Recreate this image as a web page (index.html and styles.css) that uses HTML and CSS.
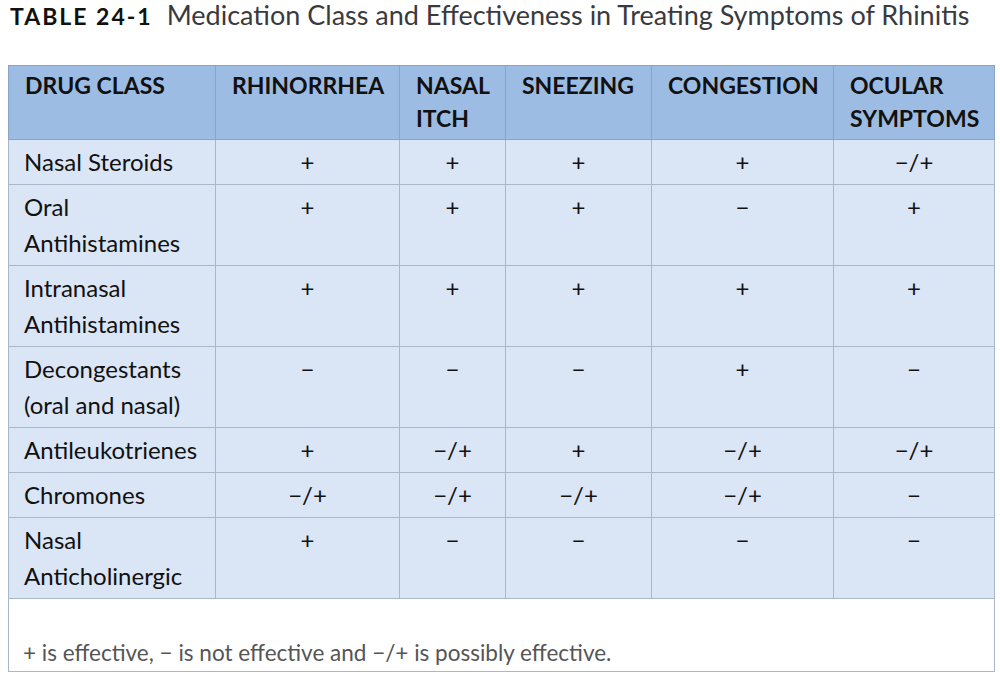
FILE: index.html
```html
<!DOCTYPE html>
<html>
<head>
<meta charset="utf-8">
<link rel="stylesheet" href="styles.css">
</head>
<body>
<h1 class="title"><span class="label">TABLE 24-1</span><span class="caption">Medication Class and Effectiveness in Treating Symptoms of Rhinitis</span></h1>
<table class="grid">
  <colgroup>
    <col class="c1"><col class="c2"><col class="c3"><col class="c4"><col class="c5"><col class="c6">
  </colgroup>
  <thead>
    <tr>
      <th>DRUG CLASS</th>
      <th>RHINORRHEA</th>
      <th>NASAL ITCH</th>
      <th>SNEEZING</th>
      <th>CONGESTION</th>
      <th>OCULAR SYMPTOMS</th>
    </tr>
  </thead>
  <tbody>
    <tr><td class="name">Nasal Steroids</td><td>+</td><td>+</td><td>+</td><td>+</td><td>−/+</td></tr>
    <tr><td class="name">Oral<br>Antihistamines</td><td>+</td><td>+</td><td>+</td><td>−</td><td>+</td></tr>
    <tr><td class="name">Intranasal<br>Antihistamines</td><td>+</td><td>+</td><td>+</td><td>+</td><td>+</td></tr>
    <tr><td class="name">Decongestants<br>(oral and nasal)</td><td>−</td><td>−</td><td>−</td><td>+</td><td>−</td></tr>
    <tr><td class="name">Antileukotrienes</td><td>+</td><td>−/+</td><td>+</td><td>−/+</td><td>−/+</td></tr>
    <tr><td class="name">Chromones</td><td>−/+</td><td>−/+</td><td>−/+</td><td>−/+</td><td>−</td></tr>
    <tr><td class="name">Nasal<br>Anticholinergic</td><td>+</td><td>−</td><td>−</td><td>−</td><td>−</td></tr>
  </tbody>
  <tfoot>
    <tr><td colspan="6" class="note">+ is effective, − is not effective and −/+ is possibly effective.</td></tr>
  </tfoot>
</table>
</body>
</html>
```
FILE: styles.css
```css
body {
  margin: 0;
  padding: 0 8px;
  background: #ffffff;
  font-family: Lato, "Open Sans", sans-serif;
}
.title {
  margin: 0;
  padding: 0 0 0 2px;
  height: 65px;
  line-height: 26px;
  font-weight: normal;
  white-space: nowrap;
}
.label {
  font-size: 23px;
  font-weight: bold;
  letter-spacing: 2px;
  color: #111;
  margin-right: 14px;
}
.caption {
  font-size: 27px;
  color: #3a3a3e;
}
.grid {
  border-collapse: collapse;
  table-layout: fixed;
  width: 986px;
}
.c1 { width: 207px; }
.c2 { width: 184px; }
.c3 { width: 106px; }
.c4 { width: 146px; }
.c5 { width: 182px; }
.c6 { width: 161px; }
.grid th {
  background: #9dbce3;
  border: 1px solid #8aa4c4;
  text-align: left;
  vertical-align: top;
  font-size: 23px;
  font-weight: bold;
  line-height: 33px;
  padding: 3px 6px 4px 16px;
  color: #111;
}
.grid td {
  background: #dae5f5;
  border: 1px solid #a9b7c9;
  text-align: center;
  vertical-align: top;
  font-size: 24px;
  line-height: 36px;
  padding: 4px 10px 4px;
  color: #111;
}
.grid td.name {
  text-align: left;
  padding-left: 15px;
}
.grid td.note {
  background: #ffffff;
  text-align: left;
  color: #555;
  font-size: 22.5px;
  padding: 36px 14px 0;
}
```
